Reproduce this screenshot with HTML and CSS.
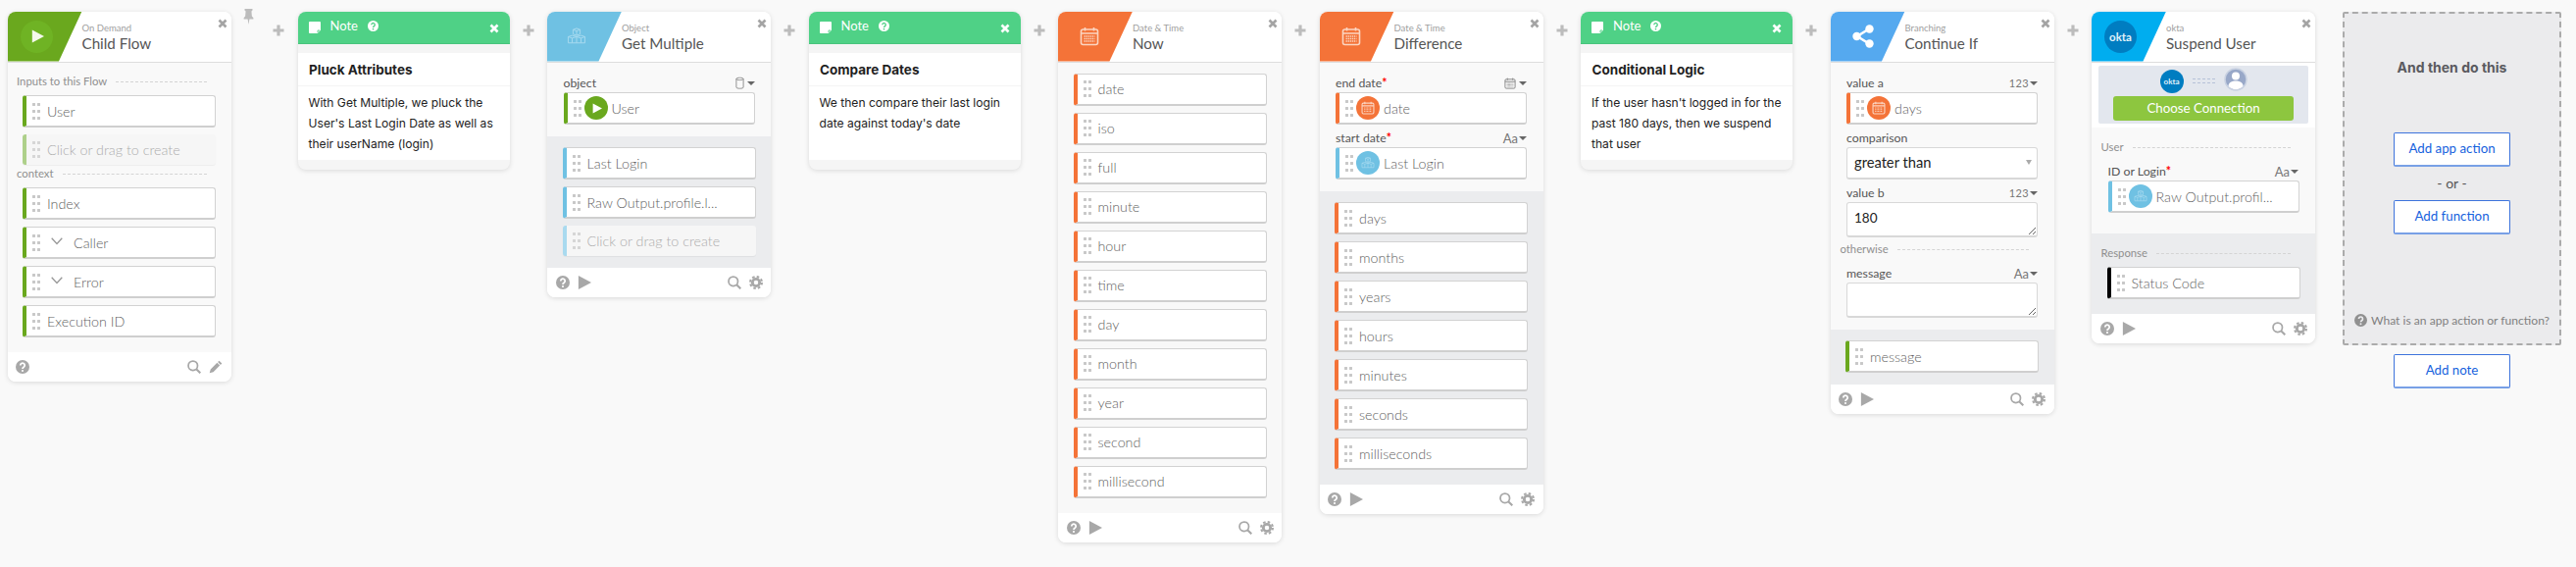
FILE: index.html
```html
<!DOCTYPE HTML>
<html>
<head>
<meta charset="utf-8">
<title>Flow</title>
<link rel="stylesheet" href="styles.css">
</head>

<body>
<svg class="sprite" width="0" height="0">
	<symbol id="i-help" viewBox="0 0 16 16"><circle cx="8" cy="8" r="8" fill="currentColor"/><path class="hole" d="M5.5 6.2a2.5 2.5 0 1 1 3.8 2.1c-.9.6-1.3 1-1.3 1.9" fill="none" stroke-width="2"/><circle class="hole-dot" cx="8" cy="12.6" r="1.2"/></symbol>
	<symbol id="i-play" viewBox="0 0 16 16"><polygon points="1,0 16,8 1,16" fill="currentColor"/></symbol>
	<symbol id="i-search" viewBox="0 0 16 16"><circle cx="6.6" cy="6.6" r="5.4" fill="none" stroke="currentColor" stroke-width="2"/><path d="M10.5 10.5L15.2 15.2" stroke="currentColor" stroke-width="2.4"/></symbol>
	<symbol id="i-gear" viewBox="0 0 16 16"><circle cx="8" cy="8" r="4.2" fill="none" stroke="currentColor" stroke-width="3.2"/><circle cx="8" cy="8" r="6.8" fill="none" stroke="currentColor" stroke-width="2.4" stroke-dasharray="2.9 2.44"/></symbol>
	<symbol id="i-pencil" viewBox="0 0 16 16"><path d="M12 .8l3.2 3.2-1.6 1.6-3.2-3.2zM9.6 3.2l3.2 3.2-7.6 7.6L.8 15.2 2 10.8z" fill="currentColor"/></symbol>
	<symbol id="i-close" viewBox="0 0 12 12"><path d="M1.8 1.8L10.2 10.2M10.2 1.8L1.8 10.2" fill="none" stroke="currentColor" stroke-width="3.2"/></symbol>
	<symbol id="i-plus" viewBox="0 0 12 12"><path d="M6 .5V11.5M.5 6H11.5" fill="none" stroke="currentColor" stroke-width="3.2"/></symbol>
	<symbol id="i-pin" viewBox="0 0 12 18"><path d="M1.5 0h9v1.8L9.3 2.8l.5 5.5 1.7 2v1.5H7L6 18l-1-6.200H.5v-1.500l1.7-2 .5-5.500L1.500 1.800z" fill="currentColor"/></symbol>
	<symbol id="i-cal" viewBox="0 0 20 20"><rect x="1.5" y="3" width="17" height="15.5" rx="2" fill="none" stroke="currentColor" stroke-width="1.6"/><path d="M5.5 1v3.5M14.5 1v3.5M1.5 7h17" stroke="currentColor" stroke-width="1.6"/><path d="M4.5 10h11M4.5 12.5h11M4.5 15h11" stroke="currentColor" stroke-width="1.3" stroke-dasharray="1.4 .7"/></symbol>
	<symbol id="i-cube" viewBox="0 0 22 20"><path d="M7 2.5L11 1l4 1.500v5L11 9 7 7.500zM7 2.500L11 4l4-1.500M11 4v5M1.500 10.500L6 9l5 1.500 5-1.500 4.500 1.500v7H1.500zM1.500 10.500L6 12l5-1.500 5 1.500 4.500-1.500M6 12v5.500M16 12v5.500M11 10.500v7" fill="none" stroke="currentColor" stroke-width="1.1"/></symbol>
	<symbol id="i-share" viewBox="0 0 22 24"><path d="M17 4.5L5 12l12 7.5" fill="none" stroke="currentColor" stroke-width="2.6"/><circle cx="17.5" cy="4.5" r="4.2" fill="currentColor"/><circle cx="4.5" cy="12" r="4.2" fill="currentColor"/><circle cx="17.5" cy="19.5" r="4.2" fill="currentColor"/></symbol>
	<symbol id="i-note" viewBox="0 0 13 13"><path d="M0 1a1 1 0 0 1 1-1h11a1 1 0 0 1 1 1v8.500L9.500 13H1a1 1 0 0 1-1-1z" fill="currentColor"/><path class="note-fold" d="M9.8 12.2V9.8h2.4" fill="none" stroke-width="1"/></symbol>
	<symbol id="i-db" viewBox="0 0 10 14"><path d="M1 2.500C1 .7 9 .7 9 2.500V12c0 1.800-8 1.800-8 0zM1 2.500c0 1.700 8 1.700 8 0" fill="none" stroke="currentColor" stroke-width="1"/></symbol>
	<symbol id="i-chev" viewBox="0 0 12 8"><path d="M.7 .7L6 6.5 11.3 .7" fill="none" stroke="currentColor" stroke-width="1.3"/></symbol>
	<symbol id="i-user" viewBox="0 0 24 24"><circle cx="12" cy="12" r="11" fill="#98a8c8" stroke="#c9d2e2" stroke-width="1.5"/><circle cx="12" cy="8.5" r="4" fill="#fff"/><path d="M4.500 19c0-4 3.500-5.500 7.500-5.500s7.500 1.500 7.500 5.500c-2 2-4.500 3.200-7.500 3.200S6.500 21 4.500 19z" fill="#fff"/></symbol>
</svg>

<div class="flow">

	<!-- on demand -->
	<div class="card">
		<div class="head">
			<div class="badge green"><span class="disc"><svg class="glyph-play"><use href="#i-play"/></svg></span></div>
			<div class="titles"><small>On Demand</small><b>Child Flow</b></div>
			<svg class="close"><use href="#i-close"/></svg>
		</div>
		<div class="body first">
			<div class="sec"><span>Inputs to this Flow</span><i></i></div>
			<div class="rows out-pad">
				<div class="pill c-green"><span class="grip"></span><span class="txt">User</span></div>
				<div class="pill c-green ghost"><span class="grip"></span><span class="txt">Click or drag to create</span></div>
			</div>
			<div class="sec sec-tight"><span>context</span><i></i></div>
			<div class="rows out-pad">
				<div class="pill c-green"><span class="grip"></span><span class="txt">Index</span></div>
				<div class="pill c-green"><span class="grip"></span><svg class="chev"><use href="#i-chev"/></svg><span class="txt">Caller</span></div>
				<div class="pill c-green"><span class="grip"></span><svg class="chev"><use href="#i-chev"/></svg><span class="txt">Error</span></div>
				<div class="pill c-green"><span class="grip"></span><span class="txt">Execution ID</span></div>
			</div>
		</div>
		<div class="foot">
			<svg class="ic"><use href="#i-help"/></svg>
			<span class="spring"></span>
			<svg class="ic"><use href="#i-search"/></svg>
			<svg class="ic"><use href="#i-pencil"/></svg>
		</div>
	</div>

	<div class="add pinned">
		<svg class="pin"><use href="#i-pin"/></svg>
		<svg class="plus"><use href="#i-plus"/></svg>
	</div>

	<div class="note">
		<div class="note-head">
			<svg class="note-ic"><use href="#i-note"/></svg>
			<span>Note</span>
			<svg class="note-help"><use href="#i-help"/></svg>
			<svg class="note-x"><use href="#i-close"/></svg>
		</div>
		<div class="note-box">
			<h4>Pluck Attributes</h4>
			<p>With Get Multiple, we pluck the User's Last Login Date as well as their userName (login)</p>
		</div>
	</div>

	<div class="add"><svg class="plus"><use href="#i-plus"/></svg></div>

	<!-- object -->
	<div class="card">
		<div class="head">
			<div class="badge sky"><svg class="glyph-cube"><use href="#i-cube"/></svg></div>
			<div class="titles"><small>Object</small><b>Get Multiple</b></div>
			<svg class="close"><use href="#i-close"/></svg>
		</div>
		<div class="inputs">
			<div class="lab"><span>object</span><span class="kind"><svg class="kind-ic"><use href="#i-db"/></svg><u></u></span></div>
			<div class="pill c-green"><span class="grip"></span><span class="dot green-dot"><svg class="dot-play"><use href="#i-play"/></svg></span><span class="txt">User</span></div>
		</div>
		<div class="outputs">
			<div class="rows">
				<div class="pill c-sky"><span class="grip"></span><span class="txt">Last Login</span></div>
				<div class="pill c-sky"><span class="grip"></span><span class="txt">Raw Output.profile.l...</span></div>
				<div class="pill c-sky ghost"><span class="grip"></span><span class="txt">Click or drag to create</span></div>
			</div>
		</div>
		<div class="foot">
			<svg class="ic"><use href="#i-help"/></svg>
			<svg class="ic"><use href="#i-play"/></svg>
			<span class="spring"></span>
			<svg class="ic"><use href="#i-search"/></svg>
			<svg class="ic"><use href="#i-gear"/></svg>
		</div>
	</div>

	<div class="add"><svg class="plus"><use href="#i-plus"/></svg></div>

	<div class="note">
		<div class="note-head">
			<svg class="note-ic"><use href="#i-note"/></svg>
			<span>Note</span>
			<svg class="note-help"><use href="#i-help"/></svg>
			<svg class="note-x"><use href="#i-close"/></svg>
		</div>
		<div class="note-box">
			<h4>Compare Dates</h4>
			<p>We then compare their last login date against today's date</p>
		</div>
	</div>

	<div class="add"><svg class="plus"><use href="#i-plus"/></svg></div>

	<!-- date & time -->
	<div class="card">
		<div class="head">
			<div class="badge orange"><svg class="glyph-cal"><use href="#i-cal"/></svg></div>
			<div class="titles"><small>Date &amp; Time</small><b>Now</b></div>
			<svg class="close"><use href="#i-close"/></svg>
		</div>
		<div class="outputs plain">
			<div class="rows">
				<div class="pill c-orange"><span class="grip"></span><span class="txt">date</span></div>
				<div class="pill c-orange"><span class="grip"></span><span class="txt">iso</span></div>
				<div class="pill c-orange"><span class="grip"></span><span class="txt">full</span></div>
				<div class="pill c-orange"><span class="grip"></span><span class="txt">minute</span></div>
				<div class="pill c-orange"><span class="grip"></span><span class="txt">hour</span></div>
				<div class="pill c-orange"><span class="grip"></span><span class="txt">time</span></div>
				<div class="pill c-orange"><span class="grip"></span><span class="txt">day</span></div>
				<div class="pill c-orange"><span class="grip"></span><span class="txt">month</span></div>
				<div class="pill c-orange"><span class="grip"></span><span class="txt">year</span></div>
				<div class="pill c-orange"><span class="grip"></span><span class="txt">second</span></div>
				<div class="pill c-orange"><span class="grip"></span><span class="txt">millisecond</span></div>
			</div>
		</div>
		<div class="foot">
			<svg class="ic"><use href="#i-help"/></svg>
			<svg class="ic"><use href="#i-play"/></svg>
			<span class="spring"></span>
			<svg class="ic"><use href="#i-search"/></svg>
			<svg class="ic"><use href="#i-gear"/></svg>
		</div>
	</div>

	<div class="add"><svg class="plus"><use href="#i-plus"/></svg></div>

	<div class="card">
		<div class="head">
			<div class="badge orange"><svg class="glyph-cal"><use href="#i-cal"/></svg></div>
			<div class="titles"><small>Date &amp; Time</small><b>Difference</b></div>
			<svg class="close"><use href="#i-close"/></svg>
		</div>
		<div class="inputs">
			<div class="lab"><span>end date<em>*</em></span><span class="kind"><svg class="kind-ic cal"><use href="#i-cal"/></svg><u></u></span></div>
			<div class="pill c-orange"><span class="grip"></span><span class="dot orange-dot"><svg class="dot-ic"><use href="#i-cal"/></svg></span><span class="txt">date</span></div>
			<div class="lab"><span>start date<em>*</em></span><span class="kind">Aa<u></u></span></div>
			<div class="pill c-sky"><span class="grip"></span><span class="dot sky-dot"><svg class="dot-ic"><use href="#i-cube"/></svg></span><span class="txt">Last Login</span></div>
		</div>
		<div class="outputs tall">
			<div class="rows">
				<div class="pill c-orange"><span class="grip"></span><span class="txt">days</span></div>
				<div class="pill c-orange"><span class="grip"></span><span class="txt">months</span></div>
				<div class="pill c-orange"><span class="grip"></span><span class="txt">years</span></div>
				<div class="pill c-orange"><span class="grip"></span><span class="txt">hours</span></div>
				<div class="pill c-orange"><span class="grip"></span><span class="txt">minutes</span></div>
				<div class="pill c-orange"><span class="grip"></span><span class="txt">seconds</span></div>
				<div class="pill c-orange"><span class="grip"></span><span class="txt">milliseconds</span></div>
			</div>
		</div>
		<div class="foot">
			<svg class="ic"><use href="#i-help"/></svg>
			<svg class="ic"><use href="#i-play"/></svg>
			<span class="spring"></span>
			<svg class="ic"><use href="#i-search"/></svg>
			<svg class="ic"><use href="#i-gear"/></svg>
		</div>
	</div>

	<div class="add"><svg class="plus"><use href="#i-plus"/></svg></div>

	<div class="note">
		<div class="note-head">
			<svg class="note-ic"><use href="#i-note"/></svg>
			<span>Note</span>
			<svg class="note-help"><use href="#i-help"/></svg>
			<svg class="note-x"><use href="#i-close"/></svg>
		</div>
		<div class="note-box">
			<h4>Conditional Logic</h4>
			<p>If the user hasn't logged in for the past 180 days, then we suspend that user</p>
		</div>
	</div>

	<div class="add"><svg class="plus"><use href="#i-plus"/></svg></div>

	<!-- branching -->
	<div class="card">
		<div class="head">
			<div class="badge blue"><svg class="glyph-share"><use href="#i-share"/></svg></div>
			<div class="titles"><small>Branching</small><b>Continue If</b></div>
			<svg class="close"><use href="#i-close"/></svg>
		</div>
		<div class="inputs">
			<div class="lab"><span>value a</span><span class="kind num">123<u></u></span></div>
			<div class="pill c-orange"><span class="grip"></span><span class="dot orange-dot"><svg class="dot-ic"><use href="#i-cal"/></svg></span><span class="txt">days</span></div>
			<div class="lab"><span>comparison</span></div>
			<div class="select"><span>greater than</span><u></u></div>
			<div class="lab"><span>value b</span><span class="kind num">123<u></u></span></div>
			<textarea class="area" rows="1">180</textarea>
			<div class="sec sec-other"><span>otherwise</span><i></i></div>
			<div class="lab lab-msg"><span>message</span><span class="kind">Aa<u></u></span></div>
			<textarea class="area" rows="1"></textarea>
		</div>
		<div class="outputs">
			<div class="rows">
				<div class="pill c-green"><span class="grip"></span><span class="txt">message</span></div>
			</div>
		</div>
		<div class="foot">
			<svg class="ic"><use href="#i-help"/></svg>
			<svg class="ic"><use href="#i-play"/></svg>
			<span class="spring"></span>
			<svg class="ic"><use href="#i-search"/></svg>
			<svg class="ic"><use href="#i-gear"/></svg>
		</div>
	</div>

	<div class="add"><svg class="plus"><use href="#i-plus"/></svg></div>

	<!-- okta -->
	<div class="card">
		<div class="head">
			<div class="badge okta-bg"><span class="okta">okta</span></div>
			<div class="titles"><small>okta</small><b>Suspend User</b></div>
			<svg class="close"><use href="#i-close"/></svg>
		</div>
		<div class="conn-wrap">
			<div class="conn">
				<div class="conn-top">
					<span class="okta okta-sm">okta</span>
					<span class="conn-line"></span>
					<svg class="conn-user"><use href="#i-user"/></svg>
				</div>
				<div class="choose">Choose Connection</div>
			</div>
		</div>
		<div class="user-sec">
			<div class="sec"><span>User</span><i></i></div>
			<div class="lab lab-id"><span>ID or Login<em>*</em></span><span class="kind">Aa<u></u></span></div>
			<div class="pill c-sky"><span class="grip"></span><span class="dot sky-dot"><svg class="dot-ic"><use href="#i-cube"/></svg></span><span class="txt">Raw Output.profil...</span></div>
		</div>
		<div class="resp">
			<div class="sec"><span>Response</span><i></i></div>
			<div class="pill c-black"><span class="grip"></span><span class="txt">Status Code</span></div>
		</div>
		<div class="foot">
			<svg class="ic"><use href="#i-help"/></svg>
			<svg class="ic"><use href="#i-play"/></svg>
			<span class="spring"></span>
			<svg class="ic"><use href="#i-search"/></svg>
			<svg class="ic"><use href="#i-gear"/></svg>
		</div>
	</div>

	<!-- next step -->
	<div class="next">
		<div class="drop">
			<h3>And then do this</h3>
			<a href="javascript:;" class="btn btn-first">Add app action</a>
			<div class="or">- or -</div>
			<a href="javascript:;" class="btn">Add function</a>
			<div class="what"><svg class="what-ic"><use href="#i-help"/></svg><span>What is an app action or function?</span></div>
		</div>
		<a href="javascript:;" class="btn">Add note</a>
	</div>

</div>
</body>
</html>
```

FILE: styles.css
```css
* {box-sizing: border-box;}
html, body {margin: 0; padding: 0;}
body {background: #f9f9f9; font-family: Lato, "Liberation Sans", sans-serif; color: #666; height: 578px; overflow: hidden;}
.sprite {display: block; height: 0;}
.hole {stroke: var(--hole, #fff);}
.hole-dot {fill: var(--hole, #fff);}
.note-fold {stroke: #4fd186;}

.flow {display: flex; align-items: flex-start; padding: 11.5px 0 0 7.5px;}

/* cards */
.card {position: relative; flex: 0 0 228px; width: 228px; background: #fff; border-radius: 8px; box-shadow: 0 1px 5px rgba(0,0,0,.13); overflow: hidden;}
.head {display: flex; height: 52px; border-bottom: 1px solid #ddd; background: #fff;}
.badge {flex: 0 0 76px; height: 51px; display: flex; align-items: center; padding-left: 13px; clip-path: polygon(0 0, 100% 0, 69% 100%, 0 100%);}
.green {background: #6aa81e;}
.sky {background: #6fc1e3;}
.orange {background: #f47338;}
.blue {background: #55a9ef;}
.okta-bg {background: #00adef;}
.disc {width: 33px; height: 33px; border-radius: 50%; background: #6fb324; display: flex; align-items: center; justify-content: center;}
.glyph-play {width: 13px; height: 14px; color: #f4f8ec; margin-left: 2px;}
.glyph-cube {width: 20px; height: 18px; color: #a6daef; margin-left: 7px;}
.glyph-cal {width: 20px; height: 20px; color: #fbd5c1; margin-left: 9px;}
.glyph-share {width: 22px; height: 24px; color: #fff; margin-left: 9px;}
.okta {width: 33px; height: 33px; border-radius: 50%; background: #007dc1; color: #e2f2fa; font-size: 11.5px; font-weight: 700; display: flex; align-items: center; justify-content: center;}
.titles {display: flex; flex-direction: column; padding-top: 10px;}
.titles small {font-size: 9.5px; line-height: 13px; color: #a0a0a0;}
.titles b {font-size: 15.2px; line-height: 19px; font-weight: 400; color: #555;}
.close {position: absolute; right: 4px; top: 7px; width: 10px; height: 10px; color: #a4a4a4;}

.foot {display: flex; align-items: center; gap: 8px; height: 29.5px; padding: 0 8.5px; background: #fff;}
.ic {width: 14px; height: 14px; color: #a8a8a8;}
.spring {flex: 1;}

/* rows */
.pill {display: flex; align-items: center; height: 33px; background: #fff; border: 1px solid #d2d2d2; border-bottom: 2px solid #cfcfcf; border-left: 4px solid #999; border-radius: 3px; font-size: 14.3px; color: #5f5f5f; font-weight: 300;}
.c-green {border-left-color: #6aa81e;}
.c-sky {border-left-color: #6fc1e3;}
.c-orange {border-left-color: #f47338;}
.c-black {border-left-color: #000;}
.grip {flex: 0 0 8px; width: 8px; height: 17px; margin: 0 7px 0 6px; background: radial-gradient(circle at 1.5px 1.5px, #c8c8c8 1.4px, transparent 1.6px) 0 0 / 5px 7px;}
.txt {white-space: nowrap;}
.ghost {height: 31px; border: 0; border-left: 4px solid; background: #f6f6f6; color: #adadad; box-shadow: 0 1px 1px rgba(0,0,0,.05);}
.c-green.ghost {border-left-color: #aed08a;}
.c-sky.ghost {border-left-color: #a9daef;}
.ghost .grip {opacity: .7;}
.chev {width: 12px; height: 8px; color: #999; margin: 0 11px 2px 4px;}
.dot {flex: 0 0 24px; height: 24px; border-radius: 50%; margin: 0 4px 0 -4px; display: flex; align-items: center; justify-content: center;}
.green-dot {background: #6aa81e;}
.orange-dot {background: #f47338;}
.sky-dot {background: #6fc1e3;}
.dot-play {width: 10px; height: 11px; color: #fff; margin-left: 2px;}
.dot-ic {width: 14px; height: 14px; color: #fbd5c1;}
.sky-dot .dot-ic {color: #a6daef;}

.rows {display: flex; flex-direction: column; gap: 7px; padding: 0 15.5px;}
.body {background: #f9f9f9;}
.first {padding: 10.5px 0 15px;}
.out-pad {margin-top: 7px;}
.sec-tight {margin-top: 1px;}

/* section labels */
.sec {display: flex; align-items: center; gap: 9px; height: 16px; margin: 0 25px 0 9.5px; font-size: 11.3px; color: #8f8f8f; white-space: nowrap;}
.sec i {flex: 1; margin-top: 3px; border-top: 1px dashed #d4d4d4;}

/* inputs */
.inputs {background: #f9f9f9; padding: 13.5px 16.5px 12px;}
.lab {display: flex; justify-content: space-between; align-items: center; height: 17px; padding-bottom: 2px; margin-top: 6px; font-size: 12.3px; color: #555;}
.lab:first-child {margin-top: 0;}
.lab em {color: #f00; font-style: normal; font-weight: 700;}
.kind {display: flex; align-items: center; font-size: 13px; color: #777;}
.kind.num {font-size: 11px; letter-spacing: .4px;}
.kind u {width: 0; height: 0; margin-left: 1px; border: 4px solid transparent; border-top: 4.5px solid #666; border-bottom: 0;}
.kind-ic {width: 9px; height: 13px; color: #888; margin-right: 2px;}
.kind-ic.cal {width: 12px; height: 12px; margin-right: 2px;}
.select {display: flex; justify-content: space-between; align-items: center; height: 33px; padding: 0 5px 2px 7px; background: #fff; border: 1px solid #d8d8d8; border-bottom-width: 2px; border-radius: 3px; font-size: 14.7px; color: #222;}
.select u {border: 3px solid transparent; border-top: 5px solid #aaa; border-bottom: 0;}
.area {display: block; width: 100%; height: 36px; padding: 7px 7px; border: 1px solid #d8d8d8; border-bottom-width: 2px; border-radius: 3px; background: #fff; font: 13.5px Lato, sans-serif; color: #222; outline: 0;}
.sec-other {margin: 3px 9px 0 -6.5px;}
.lab-msg {margin-top: 10px;}

.outputs {background: #ebecee; padding: 11px 0 12px;}
.outputs.plain {background: #f8f8f8; padding-bottom: 15.5px;}
.outputs.tall {padding-bottom: 15px;}

/* notes */
.note {flex: 0 0 216px; width: 216px; background: #f5f5f5; border-radius: 8px; box-shadow: 0 1px 5px rgba(0,0,0,.13); overflow: hidden; padding-bottom: 10px;}
.note-head {--hole: #4fd186; position: relative; display: flex; align-items: center; height: 33px; padding: 0 0 3px 11px; background: #4fd186; color: #fff; font-size: 13px; border-bottom: 1px solid #48c47d;}
.note-ic {width: 12px; height: 12px; margin: 4px 10px 0 0;}
.note-help {width: 11px; height: 11px; margin-left: 10px;}
.note-x {position: absolute; right: 11px; top: 12px; width: 10px; height: 10px;}
.note-box {margin-top: 9px; background: #fff; font-family: Inter, "Liberation Sans", sans-serif; color: #222;}
.note-box h4 {margin: 0; padding: 0 11.5px; height: 34px; line-height: 34px; font-size: 13.5px; font-weight: 700; border-bottom: 1px solid #f4f4f4; color: #1f1f1f;}
.note-box p {margin: 0; padding: 6px 6px 5px 11px; height: 75px; font-size: 12.1px; line-height: 21px;}

/* okta */
.conn-wrap {background: #fff; padding: 3.5px 7px 4px;}
.conn {height: 59px; background: #e3e7ee; border-radius: 2px; padding: 0 15px;}
.conn-top {display: flex; align-items: center; justify-content: center; height: 31px; gap: 9px;}
.okta-sm {flex: 0 0 24px; height: 24px; font-size: 8px;}
.conn-line {width: 23px; height: 5px; border-top: 1px dashed #b6c2d8; border-bottom: 1px dashed #b6c2d8;}
.conn-user {width: 24px; height: 24px; margin-top: -4px;}
.choose {height: 25px; line-height: 24px; background: #8dc63f; border-radius: 3px; color: #fff; font-size: 13.3px; text-align: center;}
.user-sec {height: 108px; background: #f9f9f9; padding-top: 11px;}
.user-sec .pill {margin: 0 16.5px;}
.lab-id {margin: 10px 17px 0 16.5px;}
.resp {height: 82px; background: #ebecee; padding-top: 11px;}
.resp .pill {margin: 7px 15.5px 0;}

/* plus between cards */
.add {flex: 0 0 38.5px; display: flex; flex-direction: column; align-items: center; padding-top: 13px;}
.plus {width: 12px; height: 12px; color: #bcbcbc;}
.pinned {flex-basis: 68px; position: relative; padding-left: 29px;}
.pin {position: absolute; left: 12px; top: -3px; width: 11px; height: 16px; color: #bcbcbc;}

/* next step */
.next {flex: 0 0 223px; margin-left: 28px; display: flex; flex-direction: column; align-items: center; gap: 9px;}
.drop {display: flex; flex-direction: column; align-items: center; width: 223px; height: 340px; padding: 46px 0 16px; background: #ebebed; border: 2px dashed #ababab; border-radius: 2px;}
.drop h3 {margin: 0; font-family: Inter, "Liberation Sans", sans-serif; font-size: 14px; line-height: 18px; font-weight: 700; color: #5a5a60;}
.btn {display: block; flex: none; width: 119px; height: 35px; line-height: 30px; text-align: center; background: #fff; border: 1px solid #3d73dc; border-bottom: 2px solid #78a0e6; border-radius: 2px; color: #1662dd; font-size: 13.3px; text-decoration: none;}
.btn-first {margin-top: 57px;}
.or {margin: 8px 0; font-size: 14px; line-height: 18px; color: #555;}
.what {display: flex; align-items: center; gap: 4px; margin-top: auto; font-size: 12.1px; color: #808080; white-space: nowrap;}
.what-ic {--hole: #ebebed; width: 13px; height: 13px; color: #909090;}
```
